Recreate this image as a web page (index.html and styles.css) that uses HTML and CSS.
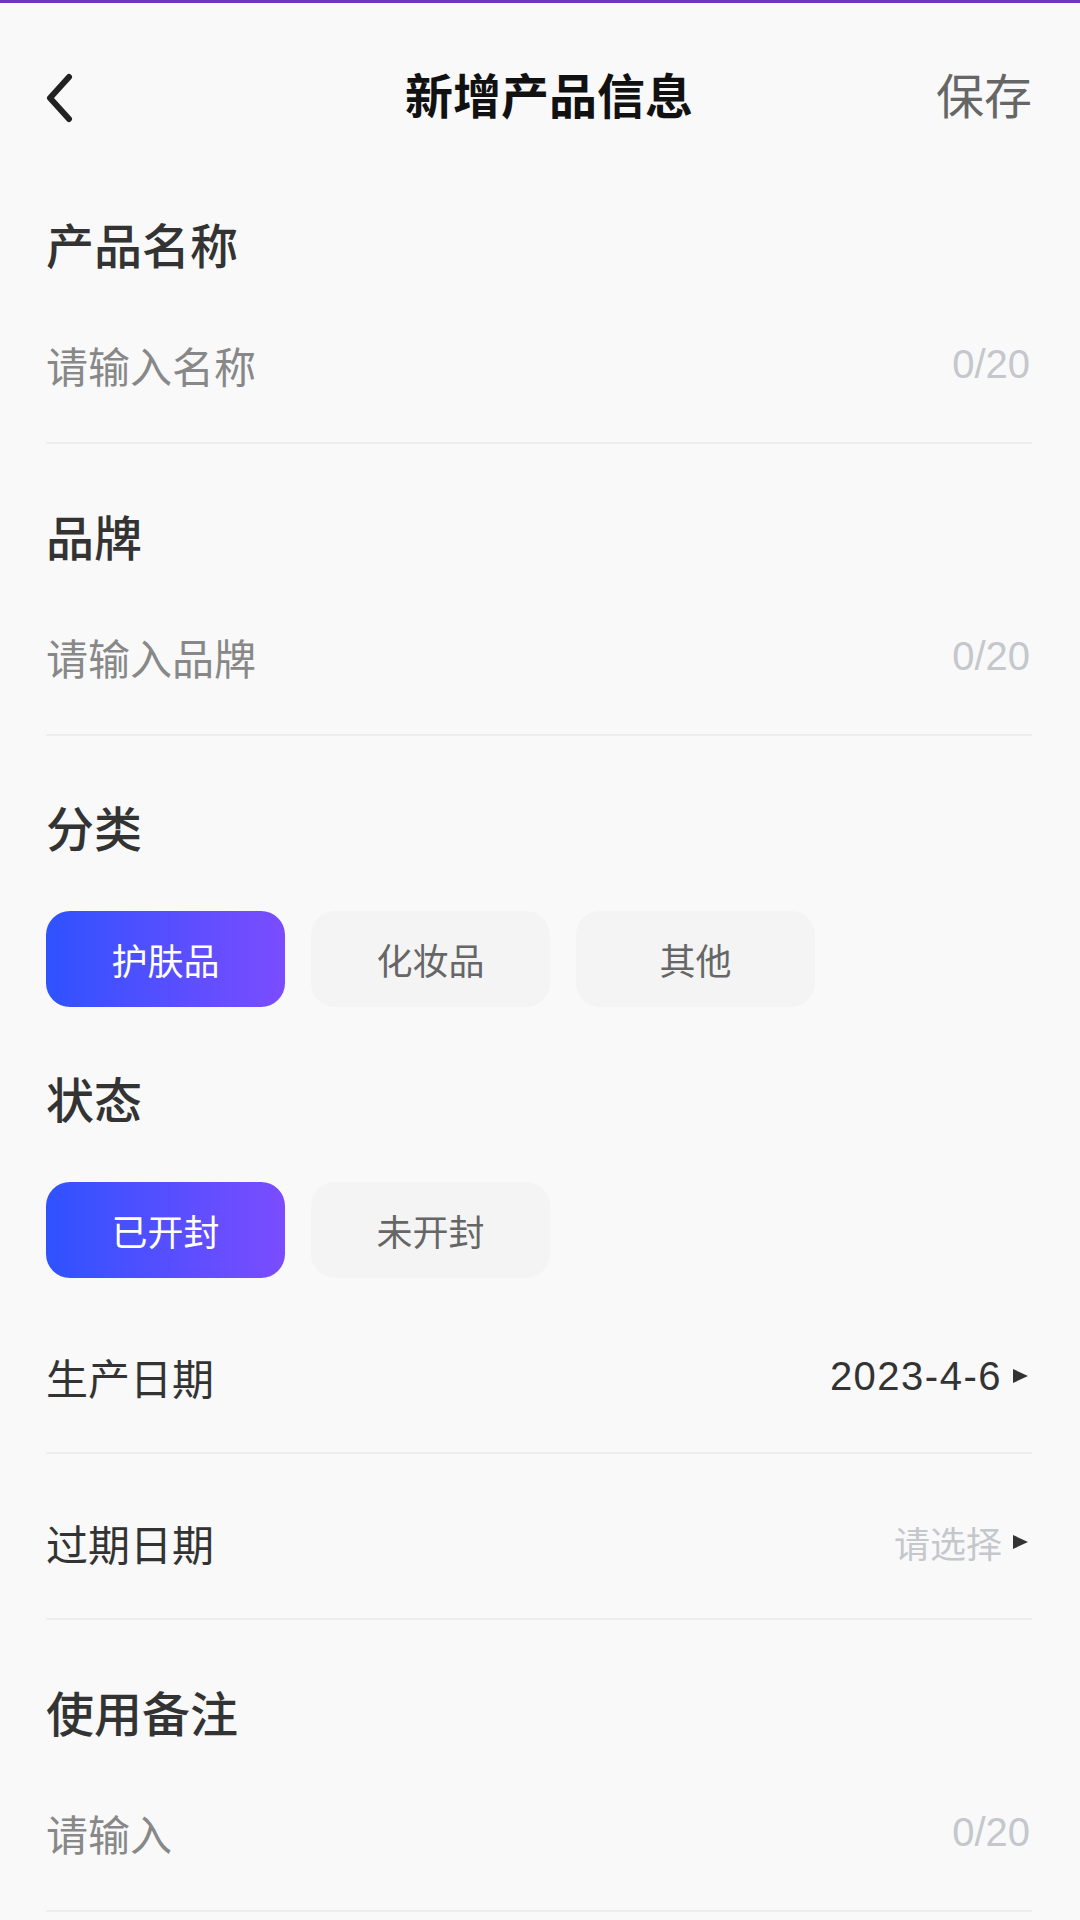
FILE: index.html
```html
<!DOCTYPE html>
<html lang="zh-CN">
<head>
    <meta charset="UTF-8">
    <meta name="viewport" content="width=device-width, initial-scale=1.0">
    <title>新增产品信息</title>
    <link rel="stylesheet" href="styles.css">
</head>
<body>
    <div class="top-line"></div>

    <div class="header">
        <button class="back">
            <svg width="28" height="50" viewBox="0 0 28 50">
                <path d="M23 4 L4 25 L23 46" fill="none" stroke="#222" stroke-width="6" stroke-linecap="round" stroke-linejoin="round"/>
            </svg>
        </button>
        <h2>新增产品信息</h2>
        <button class="save">保存</button>
    </div>

    <div class="form">
        <!-- name -->
        <div class="field">
            <h3>产品名称</h3>
            <div class="input-row">
                <span class="placeholder">请输入名称</span>
                <span class="count">0/20</span>
            </div>
        </div>

        <div class="field">
            <h3>品牌</h3>
            <div class="input-row">
                <span class="placeholder">请输入品牌</span>
                <span class="count">0/20</span>
            </div>
        </div>

        <!-- type / status -->
        <div class="choice">
            <h3>分类</h3>
            <div class="chips">
                <button class="chip active">护肤品</button>
                <button class="chip">化妆品</button>
                <button class="chip">其他</button>
            </div>
        </div>

        <div class="choice">
            <h3>状态</h3>
            <div class="chips">
                <button class="chip active">已开封</button>
                <button class="chip">未开封</button>
            </div>
        </div>

        <!-- dates -->
        <div class="dates">
            <div class="pick-row">
                <span class="pick-label">生产日期</span>
                <span class="pick-value">2023-4-6<i class="arrow"></i></span>
            </div>
            <div class="pick-row">
                <span class="pick-label">过期日期</span>
                <span class="pick-value empty">请选择<i class="arrow"></i></span>
            </div>
        </div>

        <div class="field">
            <h3>使用备注</h3>
            <div class="input-row">
                <span class="placeholder">请输入</span>
                <span class="count">0/20</span>
            </div>
        </div>
    </div>
</body>
</html>
```

FILE: styles.css
```css
*{
    margin: 0;
    padding: 0;
    box-sizing: border-box;
    font-family: "Liberation Sans", "Noto Sans CJK SC", sans-serif;
}
body{
    width: 1080px;
    min-height: 1920px;
    background-color: #f9f9fa;
}
.top-line{
    height: 3px;
    background-color: #7232c2;
}

/* header */
.header{
    display: grid;
    grid-template-columns: 1fr auto 1fr;
    align-items: center;
    height: 149px;
    padding: 40px 48px 0 46px;
}
.back{
    justify-self: start;
    display: flex;
    background: none;
    border: none;
}
.header h2{
    margin-left: 20px;
    font-size: 48px;
    font-weight: 700;
    line-height: 60px;
    color: #111;
}
.save{
    justify-self: end;
    background: none;
    border: none;
    font-size: 48px;
    line-height: 60px;
    color: #666;
}

/* form */
.form{
    padding: 0 48px 0 46px;
}
.field{
    padding: 41px 0 17px;
    border-bottom: 2px solid #ededed;
}
.field h3,
.choice h3{
    font-size: 48px;
    font-weight: 500;
    line-height: 110px;
    color: #333;
}
.input-row{
    display: flex;
    justify-content: space-between;
    align-items: center;
    height: 122px;
}
.placeholder{
    font-size: 42px;
    color: #888;
}
.count{
    padding-right: 2px;
    font-size: 40px;
    color: #c4c7cc;
}

.choice{
    padding-top: 40px;
}
.chips{
    display: flex;
    gap: 26px;
    margin-top: 25px;
}
.chip{
    width: 239px;
    height: 96px;
    border: none;
    border-radius: 24px;
    background-color: #f4f4f4;
    color: #666;
    font-size: 36px;
}
.chip.active{
    background: linear-gradient(90deg, #2f52ff, #7b4cff);
    color: #fff;
}

.dates{
    margin-top: 10px;
}
.pick-row{
    display: flex;
    justify-content: space-between;
    align-items: center;
    height: 166px;
    padding-top: 12px;
    border-bottom: 2px solid #ededed;
}
.pick-label{
    font-size: 42px;
    color: #333;
}
.pick-value{
    display: flex;
    align-items: center;
    padding-right: 4px;
    font-size: 40px;
    letter-spacing: 1.5px;
    color: #333;
}
.pick-value.empty{
    font-size: 36px;
    letter-spacing: 0;
    color: #c4c7cc;
}
.arrow{
    width: 0;
    height: 0;
    margin-left: 11px;
    border-left: 15px solid #333;
    border-top: 7px solid transparent;
    border-bottom: 7px solid transparent;
}
```
